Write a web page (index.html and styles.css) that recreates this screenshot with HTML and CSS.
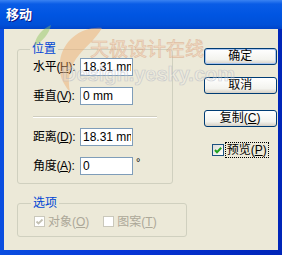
FILE: index.html
```html
<!DOCTYPE html>
<html>
<head>
    <title>移动</title>
    <link rel="stylesheet" href="styles.css">
</head>
<body>
    <div class="window">
        <div class="titlebar">移动</div>
        <div class="client">
            <div class="left">
                <fieldset class="group position">
                    <legend>位置</legend>
                    <div class="row">
                        <label>水平(<u>H</u>):</label>
                        <input type="text" value="18.31 mm">
                    </div>
                    <div class="row">
                        <label>垂直(<u>V</u>):</label>
                        <input type="text" value="0 mm">
                    </div>
                    <div class="sep"></div>
                    <div class="row">
                        <label>距离(<u>D</u>):</label>
                        <input type="text" value="18.31 mm">
                    </div>
                    <div class="row">
                        <label>角度(<u>A</u>):</label>
                        <input type="text" value="0">
                        <span class="deg">°</span>
                    </div>
                </fieldset>

                <fieldset class="group options">
                    <legend>选项</legend>
                    <div class="checks">
                        <span class="box disabled">
                            <svg width="9" height="9" viewBox="0 0 9 9"><path d="M1.5 4.5 L3.5 6.5 L7.5 2.5" fill="none" stroke="#c4c1b3" stroke-width="1.8"/></svg>
                        </span>
                        <span class="check-label off">对象(<u>O</u>)</span>
                        <span class="box disabled"></span>
                        <span class="check-label off">图案(<u>T</u>)</span>
                    </div>
                </fieldset>
            </div>

            <div class="right">
                <button class="btn default">确定</button>
                <button class="btn">取消</button>
                <button class="btn copy">复制(<u>C</u>)</button>
                <div class="preview">
                    <span class="box">
                        <svg width="10" height="10" viewBox="0 0 10 10"><path d="M2 5 L4 7.2 L8.2 2.8" fill="none" stroke="#21a121" stroke-width="2"/></svg>
                    </span>
                    <span class="focus">预览(<u>P</u>)</span>
                </div>
            </div>
        </div>

        <!-- site watermark stamped over the screenshot -->
        <svg class="watermark" width="282" height="255" viewBox="0 0 282 255">
            <path d="M34 46 C36 36 42 29 51 25 C49 34 43 41 34 46 Z" fill="#8cc45a" opacity="0.45"/>
            <path d="M102 28 C82 26 63 40 60 61 C58 74 63 84 70 92 C67 79 70 65 79 55 C86 46 95 40 102 28 Z" fill="#f0a868" opacity="0.45"/>
            <text x="90" y="56" class="wm-cn">天极设计在线</text>
            <text x="62" y="81" class="wm-en">Design.yesky.com</text>
        </svg>
    </div>
</body>
</html>
```

FILE: styles.css
```css
* {
    box-sizing: border-box;
}

body {
    margin: 0;
    font-family: "Liberation Sans", "Noto Sans CJK SC", sans-serif;
    font-size: 12px;
    color: #000;
}

.window {
    position: relative;
    width: 282px;
    height: 255px;
    display: flex;
    flex-direction: column;
    background: linear-gradient(to right, #0a4ee0, #0837d8 40%, #0025b8);
}

.titlebar {
    height: 29px;
    padding: 5px 0 0 6px;
    color: #fff;
    font-family: "Noto Sans CJK SC", sans-serif;
    font-weight: bold;
    font-size: 13px;
    line-height: 18px;
    text-shadow: 1px 1px #0a1883;
    background: linear-gradient(#3a82f2 0, #0a5ce6 4px, #0055e2 50%, #0050d8 85%, #0044c8 100%);
}

.client {
    flex: 1;
    margin: 0 4px 5px 4px;
    background: #ece9d8;
    display: flex;
    padding-left: 13px;
}

.left {
    padding-top: 14px;
}

.group {
    margin: 0;
    width: 156px;
    border: 1px solid #d0d0bf;
    border-radius: 3px;
    padding: 2px 15px 8px 15px;
}

.group legend {
    padding: 0 2px;
    margin-left: -3px;
    height: 13px;
    line-height: 13px;
    color: #0046d5;
}

.row {
    display: flex;
    align-items: center;
    height: 18px;
    margin-bottom: 11px;
}

.row:last-child {
    margin-bottom: 0;
}

.row label {
    flex: none;
    width: 47px;
    line-height: 14px;
    letter-spacing: -0.3px;
    white-space: nowrap;
}

.row input {
    flex: none;
    width: 53px;
    height: 18px;
    margin: 0;
    padding: 0 1px 0 2px;
    border: 1px solid #7f9db9;
    background: #fff;
    font-family: "Liberation Sans", sans-serif;
    font-size: 12px;
    color: #000;
    outline: none;
}

.deg {
    align-self: flex-start;
    margin-left: 3px;
    font-size: 11px;
    line-height: 10px;
}

.sep {
    height: 1px;
    margin: 0 0 11px 0;
    background: #cfcdbf;
    box-shadow: 0 1px #fff;
}

.options {
    margin-top: 13px;
    padding: 6px 15px 9px 16px;
}

.checks {
    display: flex;
    align-items: center;
    height: 11px;
}

.box {
    display: flex;
    align-items: center;
    justify-content: center;
    width: 12px;
    height: 12px;
    border: 1px solid #1c5180;
    background: linear-gradient(135deg, #dcdcd7, #fff);
}

.box.disabled {
    width: 11px;
    height: 11px;
    border-color: #cac8bb;
    background: #fff;
}

.check-label {
    margin-left: 3px;
    margin-right: 14px;
    line-height: 14px;
    white-space: nowrap;
}

.off {
    color: #aca899;
}

.right {
    display: flex;
    flex-direction: column;
    margin-left: 17px;
    padding-top: 19px;
}

.btn {
    width: 73px;
    height: 17px;
    margin: 0 0 12px 0;
    padding: 0;
    border: 1px solid #003c74;
    border-radius: 3px;
    background: linear-gradient(#ffffff, #f3f3ee 70%, #d6d0c5);
    font-family: "Liberation Sans", "Noto Sans CJK SC", sans-serif;
    font-size: 12px;
    line-height: 15px;
    color: #000;
}

.btn.default {
    box-shadow: inset 0 0 0 1px #a8c4f0;
}

.btn.copy {
    margin-top: 4px;
    margin-bottom: 15px;
}

.preview {
    display: flex;
    align-items: center;
    margin-left: 8px;
    height: 16px;
}

.focus {
    margin-left: 1px;
    padding: 0 1px;
    border: 1px dotted #000;
    line-height: 14px;
}

.watermark {
    position: absolute;
    top: 0;
    left: 0;
    pointer-events: none;
}

.wm-cn {
    font-family: "Noto Sans CJK SC", sans-serif;
    font-size: 19px;
    fill: #f6d6bc;
    stroke: #d9a887;
    stroke-width: 0.6;
    opacity: 0.65;
}

.wm-en {
    font-family: "Liberation Sans", sans-serif;
    font-size: 20px;
    font-weight: bold;
    fill: #f2f2f2;
    fill-opacity: 0.4;
    stroke: #b4b8c4;
    stroke-width: 0.7;
    opacity: 0.6;
}
```
